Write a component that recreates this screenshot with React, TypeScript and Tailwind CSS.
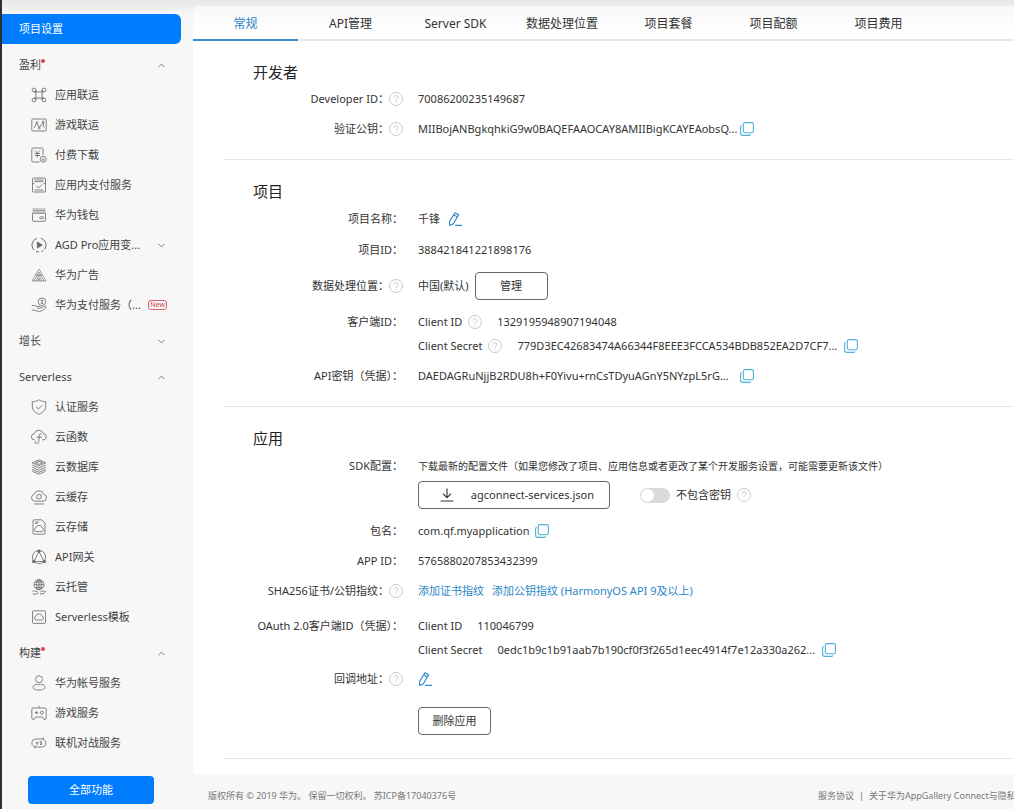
import { useState } from 'react';
import type { ReactNode } from 'react';
import { ChevronDown, ChevronUp } from 'lucide-react';
import clsx from 'clsx';

interface MenuItem {
  label: string;
  icon: ReactNode;
  expandable?: boolean;
  isNew?: boolean;
}

interface MenuGroup {
  label: string;
  open: boolean;
  dot?: boolean;
  items: MenuItem[];
}

const MENU: MenuGroup[] = [
  {
    label: '盈利',
    open: true,
    dot: true,
    items: [
      {
        label: '应用联运',
        icon: (
          <>
            <circle cx="3" cy="3" r="1.9" />
            <circle cx="13" cy="3" r="1.9" />
            <circle cx="3" cy="13" r="1.9" />
            <circle cx="13" cy="13" r="1.9" />
            <path d="M4.9 3v10M11.1 3v10M3 4.9h10M3 11.1h10" />
          </>
        ),
      },
      {
        label: '游戏联运',
        icon: (
          <>
            <rect x=".8" y="2" width="14.4" height="12" rx="1" />
            <path d="M3.2 11l2.4-4.600M6.200 6.500l1.800 3.800M8.500 10.300l3.300-4.500M12.300 6l.6 4.500" />
            <circle cx="5.8" cy="5.6" r=".9" />
            <circle cx="8.2" cy="11.2" r=".9" />
            <circle cx="12.2" cy="5" r=".9" />
          </>
        ),
      },
      {
        label: '付费下载',
        icon: (
          <>
            <path d="M8.5 15H2a1.2 1.2 0 0 1-1.2-1.2V2.2A1.2 1.2 0 0 1 2 1h8.8A1.2 1.2 0 0 1 12 2.2V8" />
            <path d="M4 3.5l2.4 2.8 2.400-2.800M3.800 6.500H9M3.800 8.500H9M6.400 6.300v4.200" />
            <circle cx="12.2" cy="12.2" r="3" />
            <path d="M12.2 10.8v2.6M11 12.400l1.200 1.200 1.200-1.200" />
          </>
        ),
      },
      {
        label: '应用内支付服务',
        icon: (
          <>
            <rect x="1.5" y="1" width="13" height="14" rx="1" />
            <path d="M3.5 3h9M3.500 4.700h9M1.500 6.600h2M12.500 6.600h2M5.200 8.600l2.400 2.400 3.600-3.600M3.500 13h9" />
          </>
        ),
      },
      {
        label: '华为钱包',
        icon: (
          <>
            <path d="M1.5 2h13M1.500 3.500h13M1.500 5h13" strokeWidth="0.6" />
            <path d="M1.500 6.300h13V13a1.300 1.300 0 0 1-1.300 1.300H2.800A1.300 1.300 0 0 1 1.500 13z" />
            <rect x="8.700" y="9.800" width="4" height="1.800" rx=".9" />
          </>
        ),
      },
      {
        label: 'AGD Pro应用变...',
        expandable: true,
        icon: (
          <>
            <path
              d="M6 1.4A7 7 0 0 0 3 13M5 14.400a7 7 0 0 0 3 .6M10 1.300A7 7 0 0 1 13.600 12.200M12.400 13.500a7 7 0 0 1-2 1.200"
              strokeWidth="1"
            />
            <path d="M6.300 5l5 3-5 3z" fill="currentColor" />
          </>
        ),
      },
      {
        label: '华为广告',
        icon: (
          <path
            d="M8 2l7 12H1zM8 5l4.800 9M8 5L3.200 14M8 8l2.800 6M8 8l-2.800 6M8 11l1 3M8 11l-1 3M4.500 8h7"
            strokeWidth="0.6"
          />
        ),
      },
      {
        label: '华为支付服务（...',
        isNew: true,
        icon: (
          <>
            <circle cx="11" cy="4.8" r="3.800" />
            <path d="M9.600 3.400h2.800M11 3.400v3M9.800 6.400h2.400" />
            <path d="M.8 8.500h2.400c1.400 0 2 1 3.200 1h2.200c1.200 0 1.200 1.700 0 1.700H6M9.800 11l3.700-1.600c1.300-.5 2 .8 1 1.600-2 1.700-3.500 3.400-6.300 3.400-2.500 0-3-1.300-7.400-1.300" />
          </>
        ),
      },
    ],
  },
  { label: '增长', open: false, items: [] },
  {
    label: 'Serverless',
    open: true,
    items: [
      {
        label: '认证服务',
        icon: (
          <>
            <path d="M8 .8c2 1.300 4.300 1.900 6.700 2v5c0 3.300-2.700 5.800-6.700 7.400C4 13.600 1.300 11.100 1.300 7.800v-5C3.700 2.700 6 2.100 8 .8z" />
            <path d="M5 7.700l2.400 2.300 4-4" />
          </>
        ),
      },
      {
        label: '云函数',
        icon: (
          <>
            <path d="M4 10.800H3.500a3 3 0 0 1-.3-6A4.900 4.900 0 0 1 12.600 4.700a3.100 3.100 0 0 1 .2 6.100H11" />
            <path d="M11 5.200c-1.800-1-3 0-3 2v4.500c0 2-1.200 2.800-2.600 2.800-1.600 0-1.800-2.200-.2-2.700M5.500 8.200H11" />
          </>
        ),
      },
      {
        label: '云数据库',
        icon: (
          <>
            <path d="M8 .8l6.800 3L8 6.800l-6.800-3zM8 2.300l3.600 1.500L8 5.400 4.400 3.800z" />
            <path d="M1.200 6L8 9l6.800-3M1.200 8.200L8 11.200l6.800-3M1.200 10.300L8 13.300l6.800-3M1.200 12.200L8 15.200l6.800-3" />
          </>
        ),
      },
      {
        label: '云缓存',
        icon: (
          <>
            <path d="M4 12.200a3.500 3.500 0 0 1-.8-6.900 5 5 0 0 1 9.600 0 3.500 3.500 0 0 1-.8 6.900zM3 15h10" />
            <circle cx="8" cy="7.700" r="2.300" />
            <path d="M10.500 5.200L9.800 6M5.600 10l.6-.7" />
          </>
        ),
      },
      {
        label: '云存储',
        icon: (
          <>
            <path d="M3.200.8h7.500L14 4v10a1.200 1.200 0 0 1-1.200 1.200H3.200A1.200 1.200 0 0 1 2 14V2A1.200 1.200 0 0 1 3.200.8z" />
            <path d="M4 3h4M4 4.500h2.500M5.200 12.600a2 2 0 0 1-.3-3.900 3.200 3.200 0 0 1 6.200 0 2 2 0 0 1-.3 3.900z" />
          </>
        ),
      },
      {
        label: 'API网关',
        icon: (
          <>
            <circle cx="8" cy="8" r="6.600" />
            <path d="M8 2.500L3 12.500h10z" />
            <circle cx="8" cy="2.200" r="1.200" fill="currentColor" />
            <circle cx="2.600" cy="12.500" r="1.200" fill="currentColor" />
            <circle cx="13.400" cy="12.500" r="1.200" fill="currentColor" />
          </>
        ),
      },
      {
        label: '云托管',
        icon: (
          <>
            <circle cx="8" cy="5.700" r="5" />
            <ellipse cx="8" cy="5.700" rx="2.300" ry="5" />
            <path d="M3 5.700h10M4 3h8M4 8.500h8M8 .7v10" />
            <path d="M1.500 12.500l2.200-.7 3 1.200M1.800 15h4.500l1.200-1.500M14.500 12.500l-2.200-.7-3 1.200M9 15l4-.5 1.500-2" />
          </>
        ),
      },
      {
        label: 'Serverless模板',
        icon: (
          <>
            <rect x="1.500" y="1.800" width="13" height="12.600" rx="1" />
            <path d="M5.300 11a2 2 0 0 1-.3-3.900 3.100 3.100 0 0 1 6 0 2 2 0 0 1-.3 3.900z" />
          </>
        ),
      },
    ],
  },
  {
    label: '构建',
    open: true,
    dot: true,
    items: [
      {
        label: '华为帐号服务',
        icon: (
          <>
            <circle cx="8" cy="4.300" r="3.500" />
            <path d="M5.200 9.200C3.200 9.800 2 11 2 12.300c0 1.700 2.200 2.700 6 2.700s6-1 6-2.700c0-1.300-1.200-2.500-3.200-3.100-1.700.8-3.900.8-5.600 0z" />
          </>
        ),
      },
      {
        label: '游戏服务',
        icon: (
          <>
            <path d="M2 3h12a1.200 1.200 0 0 1 1.200 1.200V13A1.200 1.200 0 0 1 14 14.300h-1.200L11.500 12h-7l-1.300 2.300H2A1.200 1.200 0 0 1 .8 13V4.200A1.200 1.200 0 0 1 2 3zM8 3V.8M5.500 6v3.400M3.800 7.700h3.400" />
            <circle cx="10.800" cy="7.700" r="1.500" />
          </>
        ),
      },
      {
        label: '联机对战服务',
        icon: (
          <>
            <path d="M2.800 11.300A3.900 3.900 0 0 1 4.500 4H13M11.500 2.500L13 4l-1.500 1.300M13.600 5.200A3.900 3.900 0 0 1 11.500 12H3M4.500 10.700L3 12l1.500 1.500" />
            <path d="M5 6.700l1.200 2.800 1.200-2.800M10.900 6.700H9.300v1.400h1.500v1.400H9.100" />
          </>
        ),
      },
    ],
  },
];

const TABS = ['常规', 'API管理', 'Server SDK', '数据处理位置', '项目套餐', '项目配额', '项目费用'];

function MenuIcon({ children }: { children: ReactNode }) {
  return (
    <svg
      viewBox="0 0 16 16"
      className="size-4 shrink-0 text-[#666]"
      fill="none"
      stroke="currentColor"
      strokeWidth="0.8"
      strokeLinejoin="round"
      aria-hidden="true"
    >
      {children}
    </svg>
  );
}

function HelpIcon() {
  return (
    <svg viewBox="0 0 14 14" className="size-3.5 shrink-0" fill="none" stroke="#c4c4c4" strokeWidth="0.9" aria-hidden="true">
      <circle cx="7" cy="7" r="6.500" />
      <path d="M5 5.600a2 2 0 1 1 3 1.700c-.7.400-1 .7-1 1.500" />
      <path d="M7 9.800v1" />
    </svg>
  );
}

function CopyButton() {
  return (
    <button type="button" aria-label="复制" className="shrink-0">
      <svg viewBox="0 0 14 14" className="size-3.5" fill="none" stroke="#4fb0d8" strokeWidth="1.1">
        <rect x="3.300" y=".6" width="10.100" height="10.100" rx="1.600" />
        <path d="M1.700 3.300C1 3.500.6 4 .6 4.800v6.400c0 1.300.9 2.200 2.200 2.200h6.400c.8 0 1.300-.4 1.500-1.100" />
      </svg>
    </button>
  );
}

function EditButton() {
  return (
    <button type="button" aria-label="编辑" className="shrink-0">
      <svg viewBox="0 0 14 14" className="size-3.5" fill="none" stroke="#2a86c8" strokeWidth="1.1" strokeLinejoin="round">
        <path d="M6.900.7l3.700 2.100-5.200 8.900L1.700 13.400l-.2-3.800z" />
        <path d="M5.700 2.800l3.700 2.100M7.200 13.400H14" />
      </svg>
    </button>
  );
}

interface RowProps {
  label: string;
  help?: boolean;
  className?: string;
  children: ReactNode;
}

function Row({ label, help, className = 'h-[30px] items-center', children }: RowProps) {
  return (
    <div className={clsx('flex gap-[15px]', className)}>
      <div className="flex h-6 w-[179px] shrink-0 items-center justify-end whitespace-nowrap">
        <span>{label}</span>
        {help && <HelpIcon />}
      </div>
      {children}
    </div>
  );
}

function Section({ title, className = 'pb-[15px]', children }: { title: string; className?: string; children: ReactNode }) {
  return (
    <section className={clsx('ml-[31px] border-b border-[#e8e8e8] pt-5', className)}>
      <h2 className="mb-px pl-[29px] text-[15px] leading-[22px] text-[#222]">{title}</h2>
      {children}
    </section>
  );
}

function Sidebar() {
  return (
    <aside className="flex w-[191px] shrink-0 flex-col pt-3.5 text-[#444]">
      <a href="#settings" className="mr-3 flex h-[30px] items-center rounded-r-md bg-[#007dff] pl-[17px] text-white">
        项目设置
      </a>
      <nav>
        {MENU.map(group => (
          <div key={group.label} className="mt-1.5">
            <button type="button" aria-expanded={group.open} className="flex h-[30px] w-full items-center pr-[26px] pl-[17px]">
              <span>{group.label}</span>
              {group.dot && <span className="mb-2 size-1 rounded-full bg-[#e0444e]" />}
              {group.open ? (
                <ChevronUp size={11} strokeWidth={1.5} className="ml-auto" />
              ) : (
                <ChevronDown size={11} strokeWidth={1.5} className="ml-auto" />
              )}
            </button>
            {group.items.map(item => (
              <a key={item.label} href="#service" className="flex h-[30px] items-center pr-[26px] pl-[29px]">
                <MenuIcon>{item.icon}</MenuIcon>
                <span className="ml-2 whitespace-nowrap">{item.label}</span>
                {item.expandable && <ChevronDown size={11} strokeWidth={1.5} className="ml-auto" />}
                {item.isNew && (
                  <span className="ml-auto rounded-[3px] border border-[#d9606a] px-px text-[7px] leading-[8px] text-[#cf3f4b]">
                    New
                  </span>
                )}
              </a>
            ))}
          </div>
        ))}
      </nav>
      <button type="button" className="mt-[18px] mr-[39px] ml-[26px] h-7 rounded bg-[#007dff] text-white">
        全部功能
      </button>
    </aside>
  );
}

export default function App() {
  const [activeTab, setActiveTab] = useState(TABS[0]);

  return (
    <div
      lang="zh-CN"
      className="flex min-h-screen overflow-hidden border-l-2 border-[#2a2f38] bg-[#f7f7f7] bg-linear-to-b from-[#e8e8e8] to-[#f7f7f7] to-[16px] font-['Noto_Sans','Noto_Sans_CJK_SC',sans-serif] text-[11px] text-[#333]"
    >
      <Sidebar />

      <div className="flex min-w-0 flex-1 flex-col pt-1.5">
        <main className="rounded-tl-md bg-white bg-linear-to-b from-[#f7f7f7] to-white to-[24px] pb-[15px]">
          <div role="tablist" className="flex h-[35px] border-b-2 border-[#e8e8e8] text-[12px]">
            {TABS.map(tab => (
              <button
                key={tab}
                type="button"
                role="tab"
                aria-selected={tab === activeTab}
                onClick={() => setActiveTab(tab)}
                className={clsx(
                  '-mb-0.5 min-w-[105px] shrink-0 border-b-2 px-[18px] pt-0.5 whitespace-nowrap',
                  tab === activeTab ? 'border-[#3d8ec9] text-[#2a86c8]' : 'border-transparent'
                )}
              >
                {tab}
              </button>
            ))}
          </div>

          <Section title="开发者">
            <Row label="Developer ID：" help>
              <span>70086200235149687</span>
            </Row>
            <Row label="验证公钥：" help>
              <div className="flex items-center gap-[7px]">
                <span className="w-[315px] whitespace-nowrap">MIIBojANBgkqhkiG9w0BAQEFAAOCAY8AMIIBigKCAYEAobsQ...</span>
                <CopyButton />
              </div>
            </Row>
          </Section>

          <Section title="项目">
            <Row label="项目名称：" className="h-8 items-center">
              <div className="flex items-center gap-2">
                <span>千锋</span>
                <EditButton />
              </div>
            </Row>
            <Row label="项目ID：">
              <span>388421841221898176</span>
            </Row>
            <Row label="数据处理位置：" help className="h-[42px] items-center">
              <div className="flex items-center gap-1.5">
                <span>中国(默认)</span>
                <button type="button" className="h-7 w-[73px] rounded border border-[#666]">
                  管理
                </button>
              </div>
            </Row>
            <Row label="客户端ID：" className="py-[3px]">
              <div>
                <div className="flex h-6 items-center">
                  <span className="mr-1.5">Client ID</span>
                  <HelpIcon />
                  <span className="ml-[15px]">1329195948907194048</span>
                </div>
                <div className="flex h-6 items-center">
                  <span className="mr-1.5">Client Secret</span>
                  <HelpIcon />
                  <span className="mr-[7px] ml-[15px] min-w-[315px] whitespace-nowrap">
                    779D3EC42683474A66344F8EEE3FCCA534BDB852EA2D7CF7...
                  </span>
                  <CopyButton />
                </div>
              </div>
            </Row>
            <Row label="API密钥（凭据）：">
              <div className="flex items-center gap-[7px]">
                <span className="w-[315px] whitespace-nowrap">DAEDAGRuNjjB2RDU8h+F0Yivu+rnCsTDyuAGnY5NYzpL5rG...</span>
                <CopyButton />
              </div>
            </Row>
          </Section>

          <Section title="应用" className="pb-[23px]">
            <Row label="SDK配置：" className="pt-1 pb-[7px]">
              <div>
                <p className="mb-[3px] h-6 text-[10px] leading-6 whitespace-nowrap">
                  下载最新的配置文件（如果您修改了项目、应用信息或者更改了某个开发服务设置，可能需要更新该文件）
                </p>
                <div className="flex items-center">
                  <button
                    type="button"
                    className="flex h-7 w-48 items-center justify-between rounded border border-[#666] pr-[15px] pl-[21px]"
                  >
                    <svg viewBox="0 0 14 14" className="size-3.5" fill="none" stroke="#333" strokeWidth="1.1" aria-hidden="true">
                      <path d="M7 .5v9M3 5.700l4 4 4-4M.6 13h12.800" />
                    </svg>
                    agconnect-services.json
                  </button>
                  <label className="mr-1.5 ml-[30px] flex items-center gap-1.5">
                    <input
                      type="checkbox"
                      role="switch"
                      className="h-[15px] w-[30px] appearance-none rounded-full bg-[#d9dadc] p-px before:block before:size-[13px] before:rounded-full before:bg-white checked:bg-[#007dff] checked:before:ml-[15px]"
                    />
                    不包含密钥
                  </label>
                  <HelpIcon />
                </div>
              </div>
            </Row>
            <Row label="包名：">
              <div className="flex items-center gap-1.5">
                <span>com.qf.myapplication</span>
                <CopyButton />
              </div>
            </Row>
            <Row label="APP ID：">
              <span>5765880207853432399</span>
            </Row>
            <Row label="SHA256证书/公钥指纹：" help>
              <div className="flex gap-2 text-[#2a86c8]">
                <a href="#add-cert">添加证书指纹</a>
                <a href="#add-key">添加公钥指纹 (HarmonyOS API 9及以上)</a>
              </div>
            </Row>
            <Row label="OAuth 2.0客户端ID（凭据）：" className="pt-2 pb-0.5">
              <div>
                <div className="flex h-6 items-center gap-[15px]">
                  <span>Client ID</span>
                  <span>110046799</span>
                </div>
                <div className="flex h-6 items-center">
                  <span className="mr-[15px]">Client Secret</span>
                  <span className="mr-[7px] min-w-[315px] whitespace-nowrap">
                    0edc1b9c1b91aab7b190cf0f3f265d1eec4914f7e12a330a262...
                  </span>
                  <CopyButton />
                </div>
              </div>
            </Row>
            <Row label="回调地址：" help>
              <EditButton />
            </Row>
            <button type="button" className="mt-[13px] ml-[194px] block h-7 w-[73px] rounded border border-[#666]">
              删除应用
            </button>
          </Section>
        </main>

        <footer className="flex justify-between pt-3.5 pl-[15px] text-[9px] leading-4 whitespace-nowrap text-[#777]">
          <p>版权所有 © 2019 华为。 保留一切权利。 苏ICP备17040376号</p>
          <div className="flex w-[196px] shrink-0 gap-[5px]">
            <a href="#terms">服务协议</a>
            <span>|</span>
            <a href="#privacy">关于华为AppGallery Connect与隐私</a>
          </div>
        </footer>
      </div>
    </div>
  );
}
